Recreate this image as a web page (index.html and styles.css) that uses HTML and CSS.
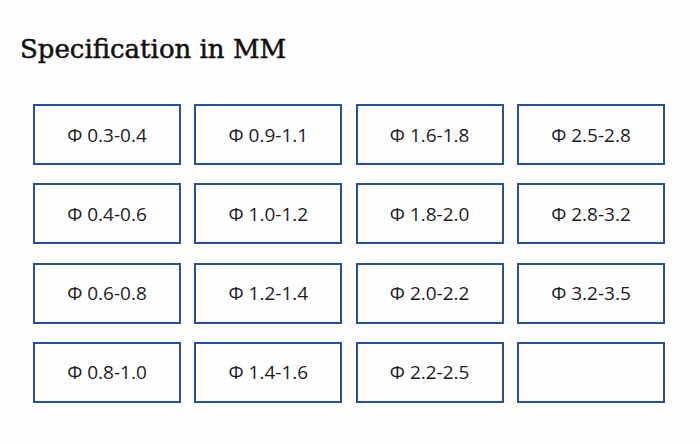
FILE: index.html
```html
<!DOCTYPE html>
<html>
<head>
<meta charset="utf-8">
<link rel="stylesheet" href="styles.css">
</head>
<body>
<h1 class="title">Specification in MM</h1>
<div class="grid">
  <div class="cell">Φ 0.3-0.4</div>
  <div class="cell">Φ 0.9-1.1</div>
  <div class="cell">Φ 1.6-1.8</div>
  <div class="cell">Φ 2.5-2.8</div>
  <div class="cell">Φ 0.4-0.6</div>
  <div class="cell">Φ 1.0-1.2</div>
  <div class="cell">Φ 1.8-2.0</div>
  <div class="cell">Φ 2.8-3.2</div>
  <div class="cell">Φ 0.6-0.8</div>
  <div class="cell">Φ 1.2-1.4</div>
  <div class="cell">Φ 2.0-2.2</div>
  <div class="cell">Φ 3.2-3.5</div>
  <div class="cell">Φ 0.8-1.0</div>
  <div class="cell">Φ 1.4-1.6</div>
  <div class="cell">Φ 2.2-2.5</div>
  <div class="cell"></div>
</div>
</body>
</html>
```
FILE: styles.css
```css
html, body {
  margin: 0;
  padding: 0;
  background: #fefefe;
}
body {
  width: 700px;
  height: 444px;
  overflow: hidden;
}
.title {
  margin: 0;
  padding: 33px 0 0 20px;
  font-family: "DejaVu Serif", serif;
  font-weight: normal;
  font-size: 26px;
  line-height: 32px;
  color: #111;
  -webkit-text-stroke: 0.5px #111;
}
.grid {
  display: grid;
  grid-template-columns: repeat(4, 148px);
  grid-auto-rows: 61px;
  column-gap: 13.33px;
  row-gap: 18.33px;
  margin: 39px 0 0 33px;
}
.cell {
  box-sizing: border-box;
  border: 2px solid #2551a0;
  display: flex;
  align-items: center;
  justify-content: center;
  font-family: "Open Sans", sans-serif;
  font-size: 19px;
  color: #1c1c1c;
}
```
